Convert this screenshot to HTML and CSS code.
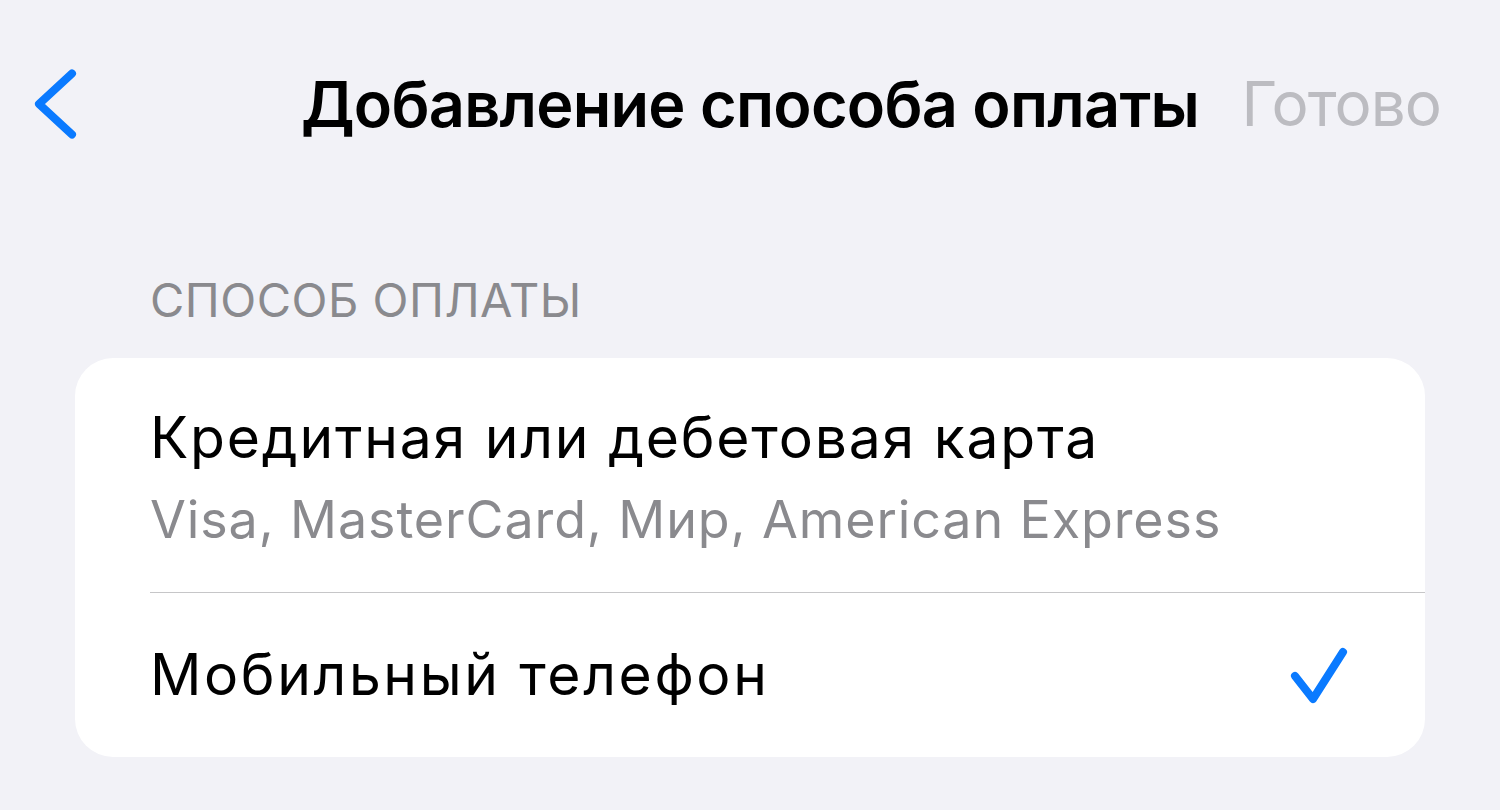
FILE: index.html
```html
<!DOCTYPE html>
<html lang="ru">
<head>
    <meta charset="UTF-8">
    <meta name="viewport" content="width=device-width, initial-scale=1.0">
    <title>Добавление способа оплаты</title>
    <link rel="stylesheet" href="styles.css">
</head>
<body>

    <header class="nav">
        <button class="nav-back" aria-label="Назад">
            <svg width="48" height="80" viewBox="0 0 48 80">
                <path d="M41 9.5 L8 40 L41 70.5" fill="none" stroke="#0a7aff" stroke-width="8" stroke-linecap="round" stroke-linejoin="round"/>
            </svg>
        </button>
        <h1 class="nav-title">Добавление способа оплаты</h1>
        <span class="nav-done">Готово</span>
    </header>

    <section class="group">
        <div class="group-label">СПОСОБ ОПЛАТЫ</div>

        <div class="card">
            <div class="row row-payment">
                <div class="row-body">
                    <div>
                        <div class="row-title">Кредитная или дебетовая карта</div>
                        <div class="row-subtitle">Visa, MasterCard, Мир, American Express</div>
                    </div>
                </div>
            </div>
            <div class="row row-phone">
                <div class="row-body">
                    <div class="row-title">Мобильный телефон</div>
                    <svg class="check" width="64" height="64" viewBox="0 0 64 64">
                        <path d="M10 33 L28 56 L58 9" fill="none" stroke="#0a7aff" stroke-width="8" stroke-linecap="round" stroke-linejoin="round"/>
                    </svg>
                </div>
            </div>
        </div>
    </section>

</body>
</html>
```

FILE: styles.css
```css
body {
    margin: 0;
    background-color: #f2f2f7;
    font-family: Inter, "Noto Sans", sans-serif;
    color: #000;
}
.nav {
    display: grid;
    grid-template-columns: 1fr auto 1fr;
    align-items: center;
    height: 70px;
    margin-top: 64px;
    padding: 0 62px;
}
.nav-back {
    justify-self: start;
    margin-left: -31px;
    padding: 0;
    border: none;
    background: none;
    display: flex;
}
.nav-title {
    margin: 0;
    font-size: 63px;
    line-height: 70px;
    font-weight: 600;
    letter-spacing: -0.75px;
}
.nav-done {
    justify-self: end;
    margin-right: -3px;
    font-size: 62px;
    line-height: 70px;
    letter-spacing: -1px;
    color: #bcbcc1;
}
.group {
    padding-top: 141px;
}
.group-label {
    padding-left: 150px;
    font-size: 47px;
    line-height: 50px;
    letter-spacing: 0.5px;
    color: #8a8a8e;
    margin-bottom: 33px;
}
.card {
    margin: 0 75px;
    background-color: #fff;
    border-radius: 38px;
    overflow: hidden;
}
.row {
    padding-left: 75px;
}
.row-body {
    display: flex;
    align-items: center;
    justify-content: space-between;
    padding-right: 76px;
    border-bottom: 1px solid #c6c6c8;
}
.row:last-child .row-body {
    border-bottom: none;
}
.row-payment .row-body {
    padding-top: 49px;
    padding-bottom: 41px;
}
.row-phone .row-body {
    height: 164px;
}
.row-title {
    font-size: 57px;
    line-height: 62px;
    letter-spacing: 1.8px;
}
.row-phone .row-title {
    letter-spacing: 2.6px;
}
.row-subtitle {
    margin-top: 20px;
    font-size: 52px;
    line-height: 62px;
    letter-spacing: 0.9px;
    color: #8a8a8e;
}
```
